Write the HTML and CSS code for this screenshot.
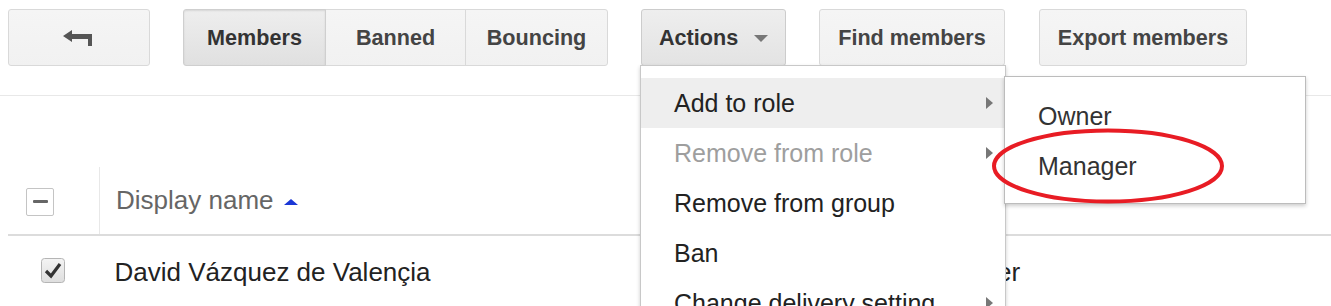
FILE: index.html
```html
<!DOCTYPE html>
<html lang="en">
<head>
    <meta charset="UTF-8">
    <title>Members</title>
    <link rel="stylesheet" href="styles.css">
</head>
<body>
<div class="page">
    <div class="toolbar">
        <button class="btn btn-back" title="Back">
            <svg width="32" height="18" viewBox="0 0 32 18">
                <polygon points="0,6 9,0 9,4 29,4 29,16 25,16 25,9 9,9 9,12" fill="#555"/>
            </svg>
        </button>
        <div class="seg">
            <button class="btn seg-btn active">Members</button>
            <button class="btn seg-btn">Banned</button>
            <button class="btn seg-btn">Bouncing</button>
        </div>
        <button class="btn btn-actions">Actions <span class="caret"></span></button>
        <button class="btn btn-wide">Find members</button>
        <button class="btn btn-wide btn-export">Export members</button>
    </div>

    <div class="rule"></div>

    <table class="members">
        <thead>
        <tr>
            <th class="col-check">
                <span class="box-mixed"><span></span></span>
            </th>
            <th class="col-name">Display name <span class="sort-up"></span></th>
            <th class="col-role"></th>
        </tr>
        </thead>
        <tbody>
        <tr>
            <td class="col-check">
                <svg class="box-checked" width="24" height="25" viewBox="0 0 24 25">
                    <defs>
                        <linearGradient id="cb" x1="0" y1="0" x2="0" y2="1">
                            <stop offset="0" stop-color="#f4f4f4"/>
                            <stop offset="1" stop-color="#dedede"/>
                        </linearGradient>
                    </defs>
                    <rect x="0.5" y="0.5" width="23" height="24" rx="3" fill="url(#cb)" stroke="#b5b5b5"/>
                    <path d="M5 13 L10 18 L19 6" fill="none" stroke="#333" stroke-width="3.2"/>
                </svg>
            </td>
            <td class="col-name">David Vázquez de Valençia</td>
            <td class="col-role">Manager</td>
        </tr>
        </tbody>
    </table>

    <!-- Actions dropdown -->
    <ul class="menu">
        <li class="hover">Add to role <span class="sub"></span></li>
        <li class="disabled">Remove from role <span class="sub"></span></li>
        <li>Remove from group</li>
        <li>Ban</li>
        <li>Change delivery setting <span class="sub"></span></li>
    </ul>

    <ul class="menu submenu">
        <li>Owner</li>
        <li>Manager</li>
    </ul>

    <svg class="circle-mark" width="240" height="82" viewBox="0 0 240 82">
        <ellipse cx="118" cy="40" rx="114" ry="35.5" fill="none" stroke="#e81c24" stroke-width="4"/>
    </svg>
</div>
</body>
</html>
```

FILE: styles.css
```css
body {
    margin: 0;
    font-family: "Liberation Sans", Arial, sans-serif;
    background: #fff;
    color: #222;
}
.page {
    position: relative;
    height: 306px;
    overflow: hidden;
}
.toolbar {
    display: flex;
    align-items: flex-start;
    gap: 33px;
    padding: 9px 0 0 8px;
}
.btn {
    height: 57px;
    min-width: 143px;
    padding: 0 17px;
    border: 1px solid #d9d9d9;
    border-radius: 3px;
    background: linear-gradient(#f5f5f5, #f1f1f1);
    color: #444;
    font-family: inherit;
    font-size: 21.6px;
    font-weight: bold;
    cursor: pointer;
}
.btn-back {
    display: flex;
    align-items: center;
    justify-content: center;
    min-width: 142px;
    padding-top: 2px;
}
.btn-wide {
    padding: 0 18px;
}
.btn-export {
    margin-left: 1px;
}
.seg {
    display: flex;
}
.seg-btn {
    min-width: 141px;
    border-radius: 0;
    margin-left: -1px;
}
.seg-btn:first-child {
    margin-left: 0;
    min-width: 143px;
    border-radius: 3px 0 0 3px;
}
.seg-btn:last-child {
    border-radius: 0 3px 3px 0;
    min-width: 143px;
}
.seg-btn.active {
    background: linear-gradient(#eeeeee, #e0e0e0);
    border-color: #cfcfcf;
    box-shadow: inset 0 1px 2px rgba(0,0,0,0.1);
    color: #333;
    position: relative;
    z-index: 1;
}
.btn-actions {
    background: linear-gradient(#eeeeee, #e3e3e3);
    border-color: #cccccc;
    color: #333;
}
.caret {
    display: inline-block;
    margin-left: 10px;
    vertical-align: middle;
    border-left: 7px solid transparent;
    border-right: 7px solid transparent;
    border-top: 7px solid #777;
}
.rule {
    height: 1px;
    background: #e8e8e8;
    margin-top: 29px;
}
.members {
    margin: 71px 0 0 8px;
    width: calc(100% - 8px);
    border-collapse: collapse;
    font-size: 26px;
}
.members th {
    height: 67px;
    text-align: left;
    font-weight: normal;
    color: #666;
    border-bottom: 2px solid #dcdcdc;
    padding: 0;
}
.members td {
    height: 69px;
    border-bottom: 1px solid #e3e3e3;
    padding: 0;
}
.members th.col-check {
    width: 73px;
    border-right: 1px solid #e8e8e8;
    padding-left: 18px;
}
.members td.col-check {
    padding-left: 33px;
    padding-bottom: 8px;
}
.members th.col-name {
    padding-left: 16px;
}
.members td.col-name {
    padding-left: 15px;
    width: 803px;
    color: #222;
    padding-bottom: 4px;
}
.members td.col-role {
    color: #222;
    padding-bottom: 4px;
}
.box-mixed {
    display: flex;
    align-items: center;
    justify-content: center;
    width: 26px;
    height: 26px;
    border: 1.5px solid #c4c4c4;
    border-radius: 2px;
    margin-top: 2px;
}
.box-mixed span {
    width: 15px;
    height: 3px;
    background: #666;
    border-radius: 1px;
}
.box-checked {
    display: block;
}
.sort-up {
    display: inline-block;
    margin-left: 3px;
    vertical-align: middle;
    border-left: 7px solid transparent;
    border-right: 7px solid transparent;
    border-bottom: 6px solid #1a37d6;
}
.menu {
    position: absolute;
    left: 640px;
    top: 65px;
    width: 364px;
    margin: 0;
    padding: 12px 0 0;
    list-style: none;
    background: #fff;
    border: 1px solid #c8c8c8;
    box-shadow: 0 2px 4px rgba(0,0,0,0.2);
    font-size: 25px;
    color: #222;
}
.menu li {
    position: relative;
    height: 50px;
    line-height: 50px;
    padding-left: 33px;
}
.menu li.hover {
    background: #eeeeee;
}
.menu li.disabled {
    color: #9e9e9e;
}
.sub {
    position: absolute;
    right: 12px;
    top: 19px;
    border-top: 6px solid transparent;
    border-bottom: 6px solid transparent;
    border-left: 7px solid #777;
}
.submenu {
    left: 1004px;
    top: 76px;
    width: 300px;
    padding: 14px 0 12px;
    border-color: #bcbcbc;
    color: #333;
}
.submenu li {
    height: 50px;
    line-height: 50px;
}
.circle-mark {
    position: absolute;
    left: 990px;
    top: 126px;
}
```
